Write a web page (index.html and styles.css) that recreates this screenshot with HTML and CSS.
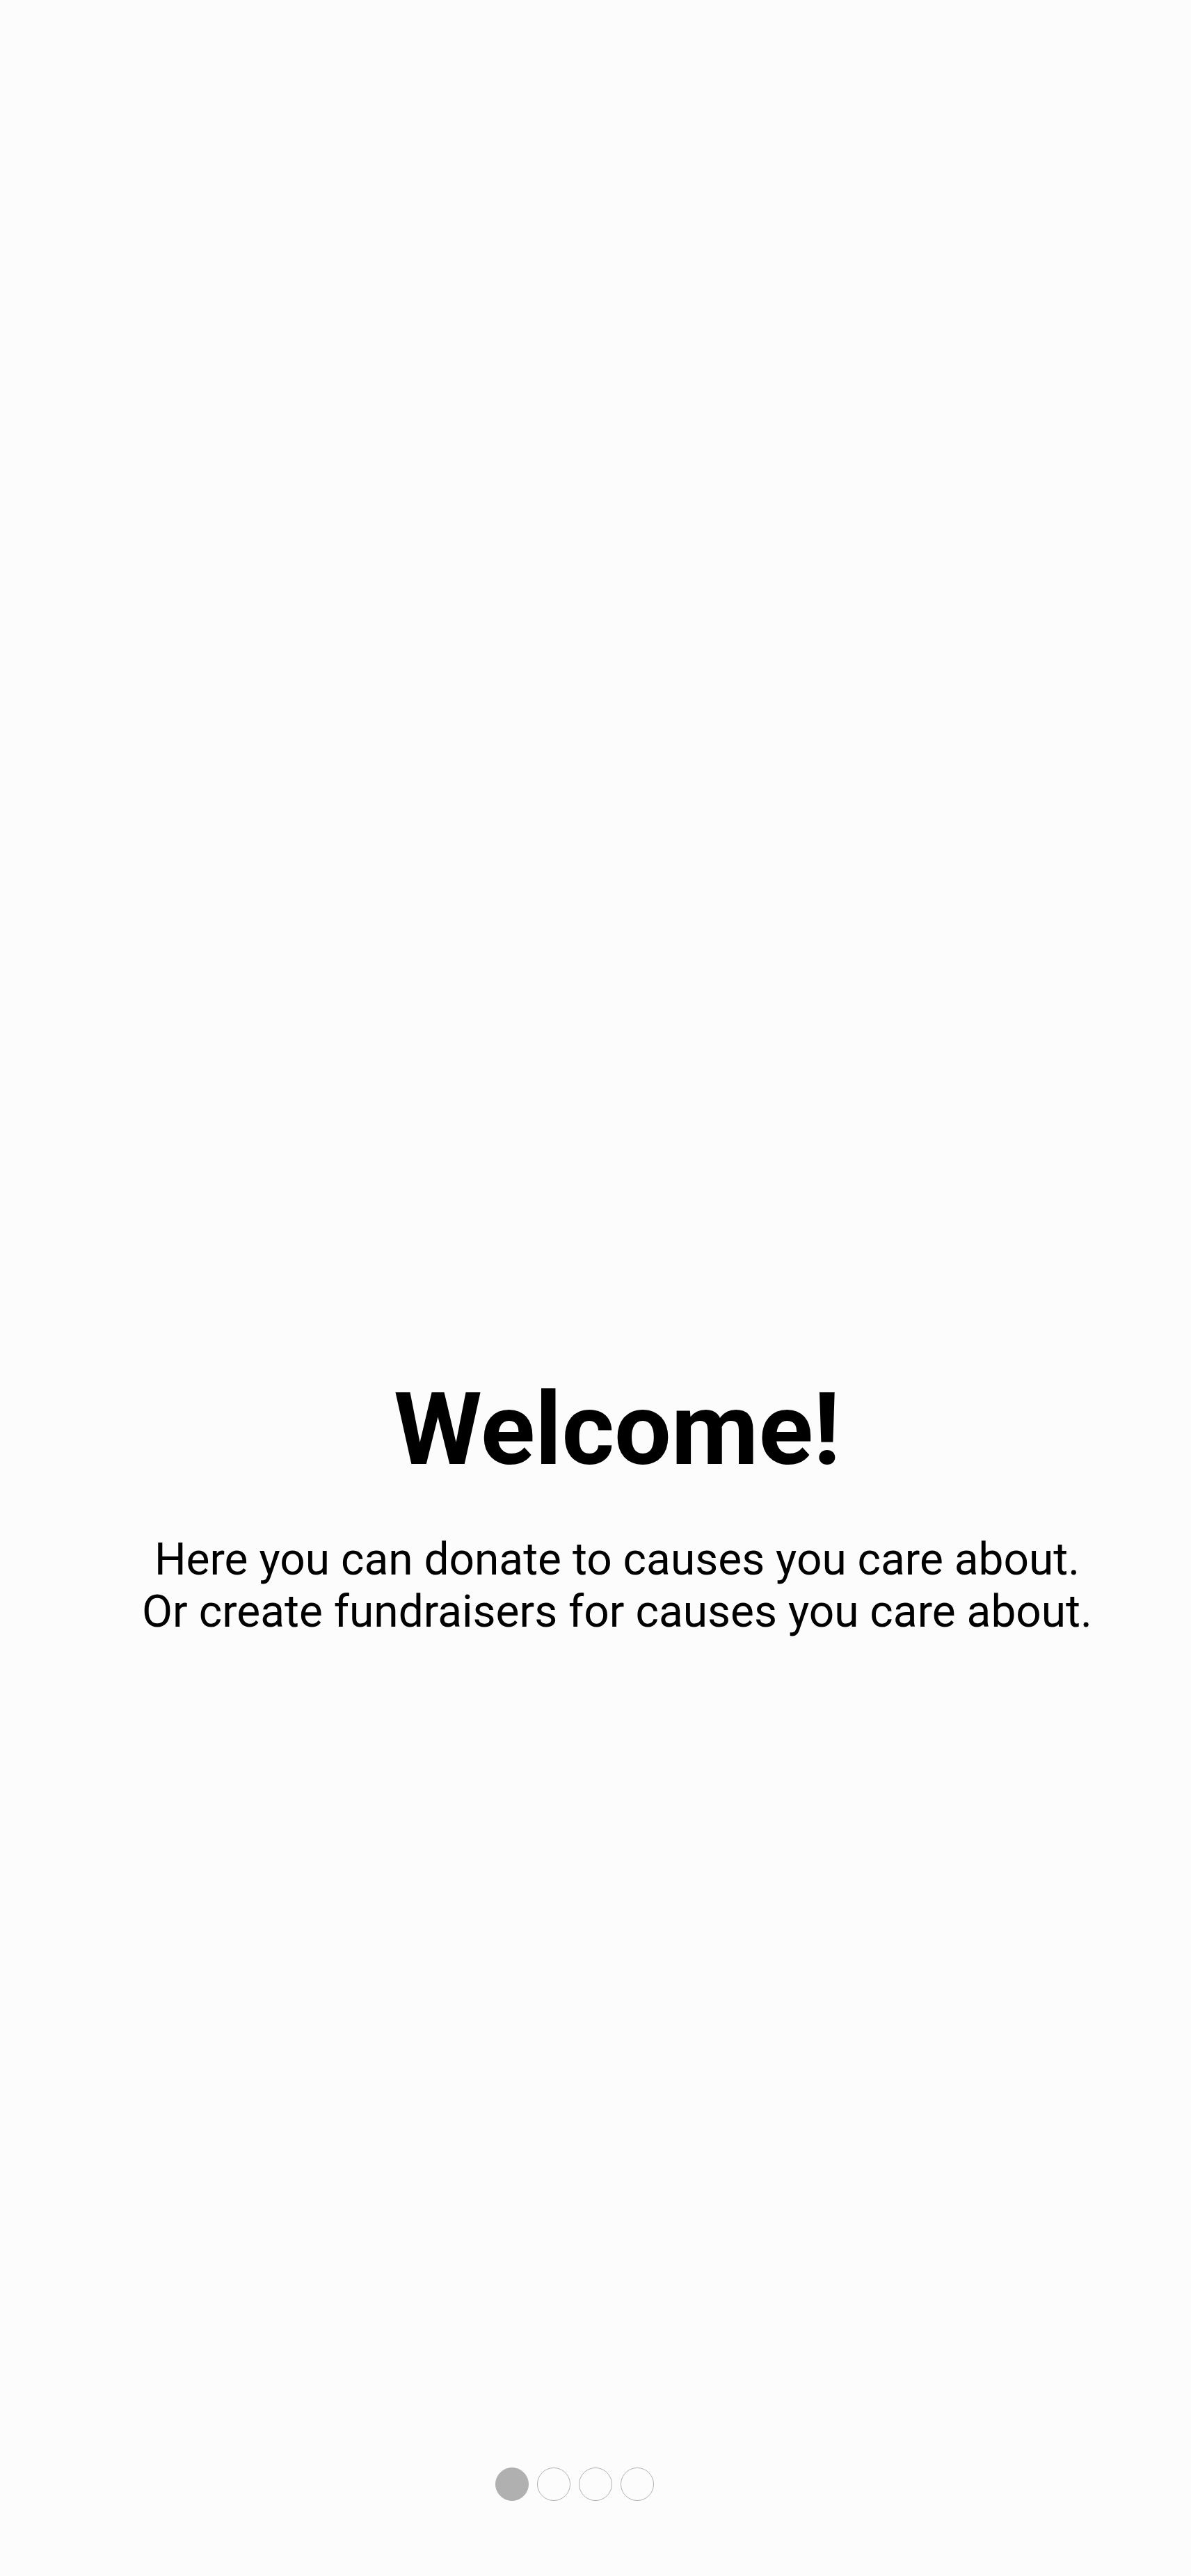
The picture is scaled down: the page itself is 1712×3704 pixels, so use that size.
FILE: index.html
```html
<!DOCTYPE html>
<html lang="en">
<head>
<meta charset="utf-8">
<title>Welcome</title>
<link rel="stylesheet" href="styles.css">
</head>
<body>
<main class="screen">
  <section class="intro">
    <h1 class="title">Welcome!</h1>
    <p class="lead">Here you can donate to causes you care about.<br>Or create fundraisers for causes you care about.</p>
  </section>
  <nav class="pager">
    <span class="dot dot-active"></span>
    <span class="dot"></span>
    <span class="dot"></span>
    <span class="dot"></span>
  </nav>
</main>
</body>
</html>
```
FILE: styles.css
```css
html, body {
  margin: 0;
  padding: 0;
  background: #fcfcfc;
}
.screen {
  width: 1712px;
  height: 3704px;
  display: flex;
  flex-direction: column;
  font-family: Roboto, "Liberation Sans", sans-serif;
  color: #000;
}
.intro {
  flex: 1;
  padding: 1970px 0 0 62px;
  text-align: center;
}
.title {
  margin: 0;
  font-size: 145px;
  font-weight: 700;
  line-height: 170px;
}
.lead {
  margin: 65px 0 0;
  font-size: 64px;
  font-weight: 400;
  line-height: 75px;
}
.pager {
  display: flex;
  justify-content: center;
  gap: 12px;
  padding: 0 60px 108px 0;
}
.dot {
  width: 48px;
  height: 48px;
  box-sizing: border-box;
  border-radius: 50%;
  border: 1.5px solid #b0b0b0;
  background: #fcfcfc;
}
.dot-active {
  background: #b0b0b0;
}
```
